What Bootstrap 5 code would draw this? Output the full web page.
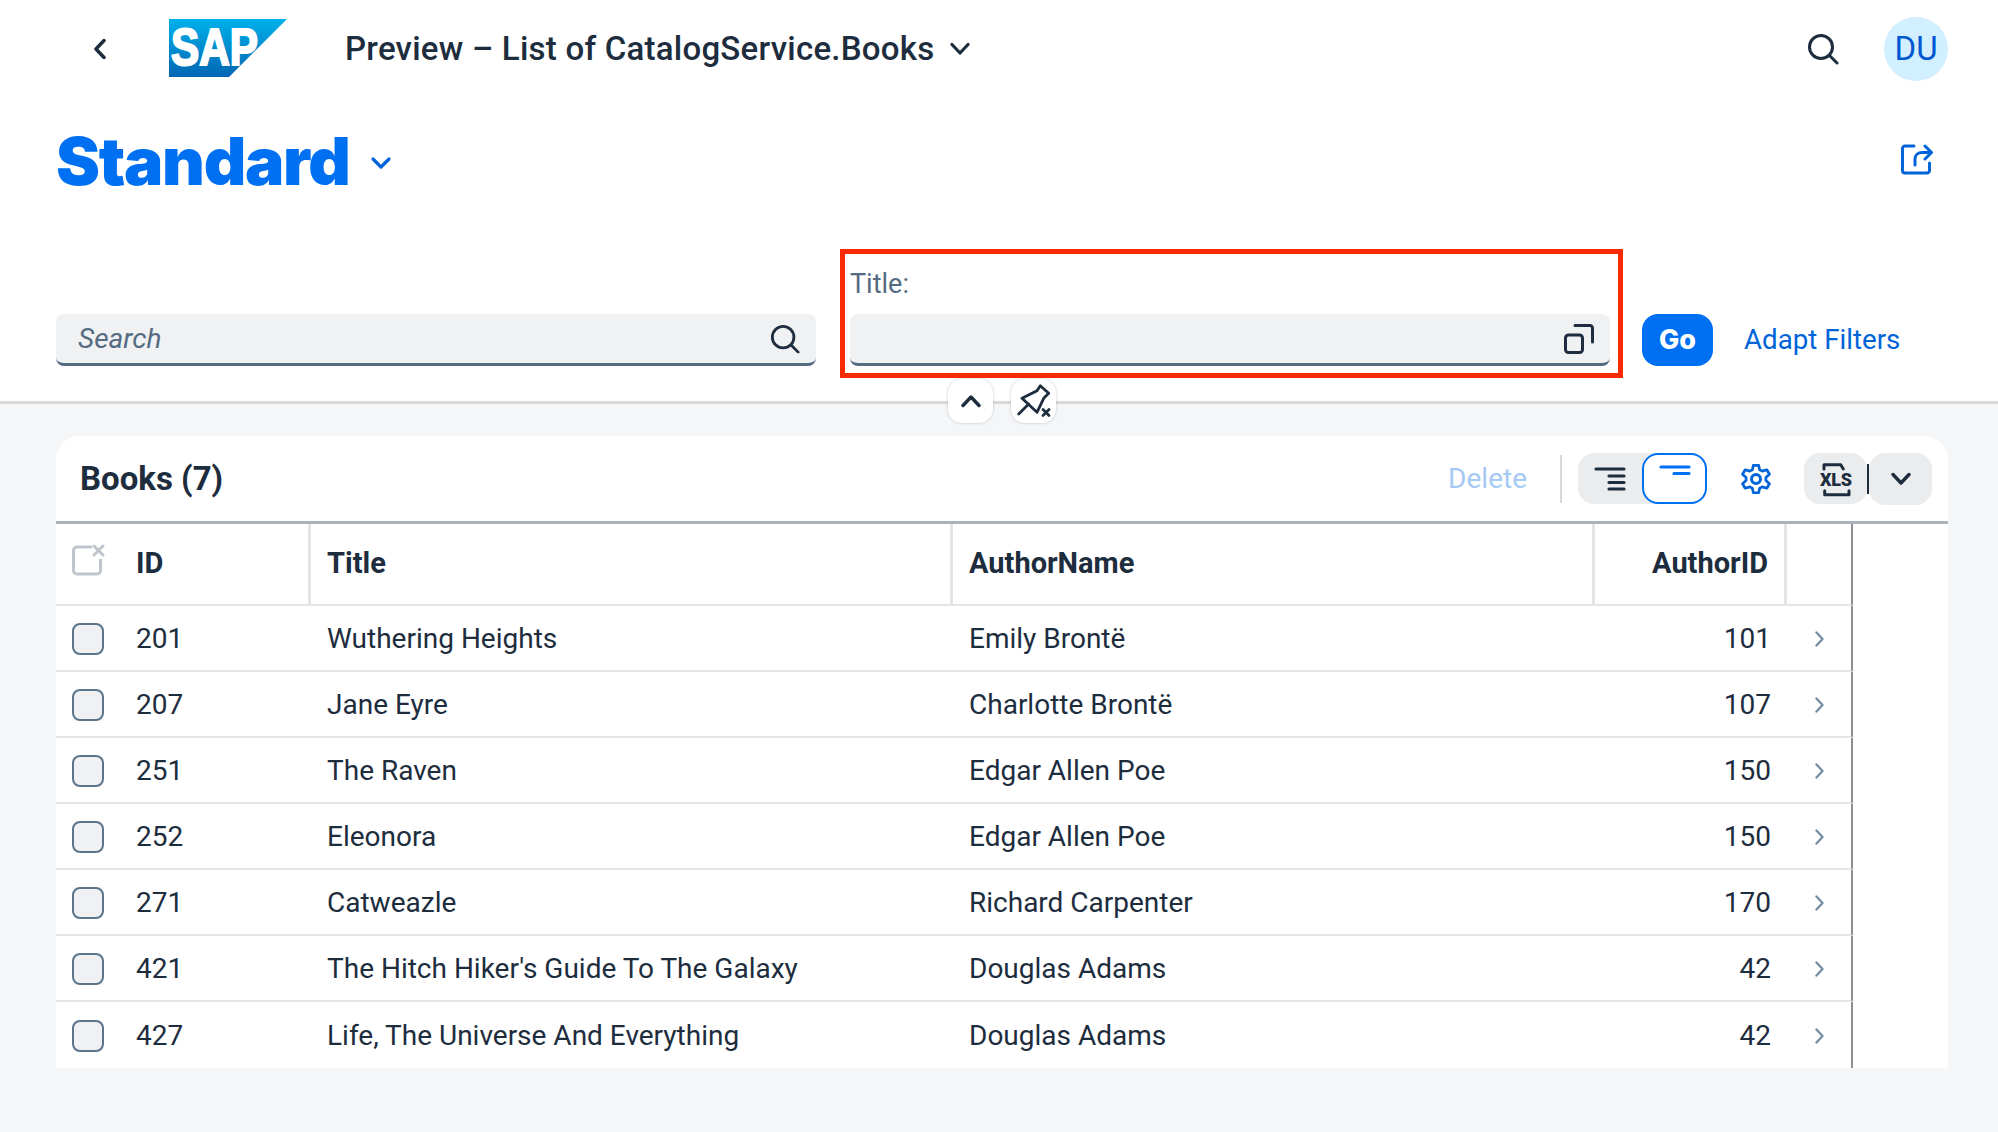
<!DOCTYPE html>
<html lang="en">
<head>
<meta charset="utf-8">
<title>Preview</title>
<link href="https://cdn.jsdelivr.net/npm/bootstrap@5.3.0/dist/css/bootstrap.min.css" rel="stylesheet">
<style>
html,body{height:100%}
body{display:flow-root;background:#f5f6f7;font-family:"Roboto","Liberation Sans",sans-serif;color:#1d2d3e;font-size:28px}
svg{display:block;flex:none}
.top-zone{position:relative;background:#fff;height:404px;border-bottom:3px solid #d9d9d9}
.shell-bar{height:97px;padding:0 50px 0 94px}
.logo-gap{margin:-1px 58px 0 63px}
.shell-title{font-size:33px;font-weight:500;letter-spacing:.24px;margin:0}
.avatar{width:64px;height:64px;border-radius:50%;background:#d1efff;color:#0057d2;font-size:33px;margin-left:45px}
.head-row{height:98px;padding:0 65px 0 56px;margin-top:15px}
.page-name{font-family:"Inter",sans-serif;font-size:66px;font-weight:900;color:#0070f2;letter-spacing:-1.300px;margin:0;line-height:1}
.std-chev{margin:4px 0 0 20px}
.share-ic{margin:-5px 0 0 auto}
.filter-bar{padding:0 0 0 56px;margin-top:39px;align-items:flex-end}
.fake-field{height:52px;background:#eff1f2;border-bottom:3px solid #556b82;border-radius:8px;padding:0 16px 0 22px}
.field-search{width:760px;margin-bottom:12px}
.search-text{font-style:italic;color:#556b82;font-size:28px}
.title-frame{width:783px;height:129px;border:5px solid #fa2a00;margin:0 19px 0 24px;padding:0 8px 7px 5px;display:flex;flex-direction:column;justify-content:flex-end}
.title-label{color:#556b82;font-size:27px;margin-bottom:12px;line-height:36px}
.go-btn{background:#0070f2;color:#fff;border:0;border-radius:16px;width:71px;height:52px;font-weight:800;font-size:27px;padding:0;margin-bottom:12px;font-family:"Inter",sans-serif}
.adapt-link{color:#0064d9;text-decoration:none;margin:0 0 17px 31px;font-size:27.700px}
.mini-btn{position:absolute;top:379px;width:45px;height:44px;background:#fff;border-radius:14px;box-shadow:0 0 3px rgba(60,70,90,.28)}
.mini-a{left:948px}
.mini-b{left:1011px}
.table-wrap{margin:32px 50px 0 56px;background:#fff;border-radius:24px 24px 0 0;overflow:hidden}
.tool-bar{height:88px;border-bottom:3px solid #a9b4be;padding:0 16px 0 24px}
.books-title{font-size:33px;font-weight:700;margin:0}
.delete-txt{color:#a6c9f4;margin-right:33px}
.tool-sep{width:2px;height:48px;background:#d9d9d9;margin-right:16px}
.seg-group{background:#ebecee;border-radius:16px;height:51px;width:129px}
.seg-item{width:64px;height:51px}
.seg-on{width:65px;background:#fff;border:2px solid #0070f2;border-radius:16px}
.gear-gap{margin:0 33px 0 34px}
.xls-box{background:#ebecee;border-radius:16px;width:63px;height:51px}
.xls-div{width:2px;height:30px;background:#1d2d3e;margin:0}
.more-box{background:#ebecee;border-radius:16px;width:63px;height:52px}
.books-grid{width:1797px;table-layout:fixed;margin:0;border-collapse:separate;border-spacing:0;--bs-table-color:#1d2d3e;--bs-table-bg:transparent}
.books-grid>:not(caption)>*>*{padding:0 0;border-bottom:2px solid #e5e5e5;vertical-align:middle;box-shadow:none;color:#1d2d3e}
.books-grid tbody td{height:66px;padding-top:2px}
.books-grid thead th{height:82px;font-weight:700;font-size:29px;border-right:3px solid #e5e5e5}
.books-grid thead th.no-right{border-right:0}
.books-grid tbody tr:last-child td{border-bottom:0}
.books-grid tr>*:last-child{border-right:2px solid #8a8f94}
.books-grid .cell-a{padding-left:13px}
.books-grid .cell-b{padding-left:16px}
.books-grid .cell-num{padding-right:16px;text-align:right}
.tick-box{width:32px;height:32px;border:2px solid #5b738b;background:#eff1f2;border-radius:8px;margin-left:16px}
.clear-ic{margin:0 0 8px 16px}
.nav-ic{margin-left:28px}
</style>
</head>
<body>
<div class="top-zone">
  <div class="shell-bar d-flex align-items-center">
    <svg width="12" height="20" viewBox="0 0 12 20"><path d="M10 1.500 2 10l8 8.500" fill="none" stroke="#1d2d3e" stroke-width="3.500" stroke-linecap="round" stroke-linejoin="round"/></svg>
    <svg class="logo-gap" width="118" height="58" viewBox="0 0 118 58" role="img" aria-label="SAP">
      <defs><linearGradient id="sapg" x1="0" y1="0" x2="0" y2="1"><stop offset="0" stop-color="#00b1eb"/><stop offset="1" stop-color="#0066b3"/></linearGradient></defs>
      <polygon points="0,0 118,0 60,58 0,58" fill="url(#sapg)"/>
      <text x="2" y="46" textLength="87" lengthAdjust="spacingAndGlyphs" font-family="Liberation Sans, sans-serif" font-weight="700" font-size="52" fill="#fff" stroke="#fff" stroke-width="2.200">SAP</text>
    </svg>
    <h1 class="shell-title">Preview – List of CatalogService.Books</h1>
    <svg class="ms-3" width="20" height="14" viewBox="0 0 20 14"><path d="M2 2.500l8 8.500 8-8.500" fill="none" stroke="#1d2d3e" stroke-width="3.200" stroke-linecap="round" stroke-linejoin="round"/></svg>
    <svg class="ms-auto" width="32" height="32" viewBox="0 0 32 32"><circle cx="14" cy="14" r="11.500" fill="none" stroke="#1d2d3e" stroke-width="3"/><path d="M23 23l7 7" stroke="#1d2d3e" stroke-width="3" stroke-linecap="round"/></svg>
    <div class="avatar d-flex align-items-center justify-content-center">DU</div>
  </div>
  <div class="head-row d-flex align-items-center">
    <h2 class="page-name">Standard</h2>
    <svg class="std-chev" width="22" height="14" viewBox="0 0 22 14"><path d="M3 3l8 8 8-8" fill="none" stroke="#0064d9" stroke-width="3.200" stroke-linecap="round" stroke-linejoin="round"/></svg>
    <svg class="share-ic" width="32" height="32" viewBox="0 0 32 32"><path d="M13 3H4a2.500 2.500 0 0 0-2.500 2.500v22A2.500 2.500 0 0 0 4 30h22a2.500 2.500 0 0 0 2.500-2.500V20" fill="none" stroke="#0064d9" stroke-width="3" stroke-linecap="round"/><path d="M14 22v-6c0-4 3-6.500 7-6.500h9M24 3l6.500 6.500L24 16" fill="none" stroke="#0064d9" stroke-width="3" stroke-linecap="round" stroke-linejoin="round"/></svg>
  </div>
  <div class="filter-bar d-flex">
    <div class="fake-field field-search d-flex align-items-center justify-content-between">
      <span class="search-text">Search</span>
      <svg width="30" height="30" viewBox="0 0 32 32"><circle cx="14" cy="14" r="11.500" fill="none" stroke="#1d2d3e" stroke-width="3"/><path d="M23 23l7 7" stroke="#1d2d3e" stroke-width="3" stroke-linecap="round"/></svg>
    </div>
    <div class="title-frame">
      <div class="title-label">Title:</div>
      <div class="fake-field d-flex align-items-center justify-content-end">
        <svg width="30" height="30" viewBox="0 0 30 30"><rect x="1.500" y="11" width="17" height="17.500" rx="3" fill="none" stroke="#1d2d3e" stroke-width="3"/><path d="M11 1.500h15a2.500 2.500 0 0 1 2.500 2.500v14" fill="none" stroke="#1d2d3e" stroke-width="3" stroke-linecap="round"/></svg>
      </div>
    </div>
    <button class="go-btn btn" type="button">Go</button>
    <a class="adapt-link" href="#">Adapt Filters</a>
  </div>
  <div class="mini-btn mini-a d-flex align-items-center justify-content-center">
    <svg width="20" height="14" viewBox="0 0 20 14"><path d="M2 11.500 10 3l8 8.500" fill="none" stroke="#1d2d3e" stroke-width="3.400" stroke-linecap="round" stroke-linejoin="round"/></svg>
  </div>
  <div class="mini-btn mini-b d-flex align-items-center justify-content-center">
    <svg width="34" height="34" viewBox="0 0 34 34"><path d="M5 14.300 20 6.700l3.300-5 8.400 7.600-5 5-6.700 14zM1.700 30l10-10" fill="none" stroke="#1d2d3e" stroke-width="2.800" stroke-linecap="round" stroke-linejoin="round"/><path d="M26 25.500l6 6M32 25.500l-6 6" stroke="#1d2d3e" stroke-width="2.800" stroke-linecap="round"/></svg>
  </div>
</div>
<div class="table-wrap">
  <div class="tool-bar d-flex align-items-center">
    <h3 class="books-title me-auto">Books (7)</h3>
    <span class="delete-txt">Delete</span>
    <span class="tool-sep"></span>
    <div class="seg-group d-flex">
      <div class="seg-item d-flex align-items-center justify-content-center">
        <svg width="32" height="24" viewBox="0 0 32 24"><path d="M2 2h28M15 9h15M15 15.500h15M15 22h15" stroke="#1d2d3e" stroke-width="3.200" stroke-linecap="round"/></svg>
      </div>
      <div class="seg-on d-flex justify-content-center pt-2">
        <svg width="32" height="16" viewBox="0 0 32 16"><path d="M2 4h28M15 10.500h15" stroke="#0070f2" stroke-width="3.200" stroke-linecap="round"/></svg>
      </div>
    </div>
    <svg class="gear-gap" width="30" height="34" viewBox="0 0 30 34"><path d="M12 2h6l1 5 3 1.500 5-1.500 3 5-4 3.500v3.500l4 3.500-3 5-5-1.500-3 1.500-1 5h-6l-1-5-3-1.500-5 1.500-3-5 4-3.500v-3.500l-4-3.500 3-5 5 1.500 3-1.500z" fill="none" stroke="#0064d9" stroke-width="3" stroke-linejoin="round" transform="translate(1.500 1.500) scale(.9)"/><circle cx="15" cy="17" r="4.500" fill="none" stroke="#0064d9" stroke-width="3"/></svg>
    <div class="xls-box d-flex align-items-center justify-content-center">
      <svg width="36" height="36" viewBox="0 0 36 36"><path d="M6 8V3.700h16.700L25.300 8M6.700 29.700v4H31v-4" fill="none" stroke="#1d2d3e" stroke-width="3" stroke-linecap="round" stroke-linejoin="round"/><text x="18" y="24.500" text-anchor="middle" font-family="Roboto, sans-serif" font-weight="900" font-size="18" textLength="32" lengthAdjust="spacing" fill="#1d2d3e">XLS</text></svg>
    </div>
    <span class="xls-div"></span>
    <div class="more-box d-flex align-items-center justify-content-center">
      <svg width="20" height="14" viewBox="0 0 20 14"><path d="M2 2.500l8 8.500 8-8.500" fill="none" stroke="#1d2d3e" stroke-width="3.400" stroke-linecap="round" stroke-linejoin="round"/></svg>
    </div>
  </div>
  <table class="table books-grid">
    <colgroup><col style="width:67px"><col style="width:188px"><col style="width:642px"><col style="width:642px"><col style="width:192px"><col style="width:66px"></colgroup>
    <thead>
      <tr>
        <th class="no-right"><svg class="clear-ic" width="34" height="32" viewBox="0 0 34 32"><path d="M20 3H5a3.500 3.500 0 0 0-3.500 3.500v20A3.500 3.500 0 0 0 5 30h20a3.500 3.500 0 0 0 3.500-3.500V15" fill="none" stroke="#c0c5cd" stroke-width="3"/><path d="M22 2l9 9M31 2l-9 9" stroke="#c0c5cd" stroke-width="3" stroke-linecap="round"/></svg></th>
        <th class="cell-a">ID</th><th class="cell-b">Title</th><th class="cell-b">AuthorName</th><th class="cell-num">AuthorID</th><th></th>
      </tr>
    </thead>
    <tbody>
      <tr><td><div class="tick-box"></div></td><td class="cell-a">201</td><td class="cell-b">Wuthering Heights</td><td class="cell-b">Emily Brontë</td><td class="cell-num">101</td><td><svg class="nav-ic" width="9" height="16" viewBox="0 0 9 16"><path d="M1.500 1.500 7.500 8l-6 6.500" fill="none" stroke="#788fa6" stroke-width="2.400" stroke-linecap="round" stroke-linejoin="round"/></svg></td></tr>
      <tr><td><div class="tick-box"></div></td><td class="cell-a">207</td><td class="cell-b">Jane Eyre</td><td class="cell-b">Charlotte Brontë</td><td class="cell-num">107</td><td><svg class="nav-ic" width="9" height="16" viewBox="0 0 9 16"><path d="M1.500 1.500 7.500 8l-6 6.500" fill="none" stroke="#788fa6" stroke-width="2.400" stroke-linecap="round" stroke-linejoin="round"/></svg></td></tr>
      <tr><td><div class="tick-box"></div></td><td class="cell-a">251</td><td class="cell-b">The Raven</td><td class="cell-b">Edgar Allen Poe</td><td class="cell-num">150</td><td><svg class="nav-ic" width="9" height="16" viewBox="0 0 9 16"><path d="M1.500 1.500 7.500 8l-6 6.500" fill="none" stroke="#788fa6" stroke-width="2.400" stroke-linecap="round" stroke-linejoin="round"/></svg></td></tr>
      <tr><td><div class="tick-box"></div></td><td class="cell-a">252</td><td class="cell-b">Eleonora</td><td class="cell-b">Edgar Allen Poe</td><td class="cell-num">150</td><td><svg class="nav-ic" width="9" height="16" viewBox="0 0 9 16"><path d="M1.500 1.500 7.500 8l-6 6.500" fill="none" stroke="#788fa6" stroke-width="2.400" stroke-linecap="round" stroke-linejoin="round"/></svg></td></tr>
      <tr><td><div class="tick-box"></div></td><td class="cell-a">271</td><td class="cell-b">Catweazle</td><td class="cell-b">Richard Carpenter</td><td class="cell-num">170</td><td><svg class="nav-ic" width="9" height="16" viewBox="0 0 9 16"><path d="M1.500 1.500 7.500 8l-6 6.500" fill="none" stroke="#788fa6" stroke-width="2.400" stroke-linecap="round" stroke-linejoin="round"/></svg></td></tr>
      <tr><td><div class="tick-box"></div></td><td class="cell-a">421</td><td class="cell-b">The Hitch Hiker's Guide To The Galaxy</td><td class="cell-b">Douglas Adams</td><td class="cell-num">42</td><td><svg class="nav-ic" width="9" height="16" viewBox="0 0 9 16"><path d="M1.500 1.500 7.500 8l-6 6.500" fill="none" stroke="#788fa6" stroke-width="2.400" stroke-linecap="round" stroke-linejoin="round"/></svg></td></tr>
      <tr><td><div class="tick-box"></div></td><td class="cell-a">427</td><td class="cell-b">Life, The Universe And Everything</td><td class="cell-b">Douglas Adams</td><td class="cell-num">42</td><td><svg class="nav-ic" width="9" height="16" viewBox="0 0 9 16"><path d="M1.500 1.500 7.500 8l-6 6.500" fill="none" stroke="#788fa6" stroke-width="2.400" stroke-linecap="round" stroke-linejoin="round"/></svg></td></tr>
    </tbody>
  </table>
</div>
<script src="https://cdn.jsdelivr.net/npm/bootstrap@5.3.0/dist/js/bootstrap.bundle.min.js"></script>
</body>
</html>
